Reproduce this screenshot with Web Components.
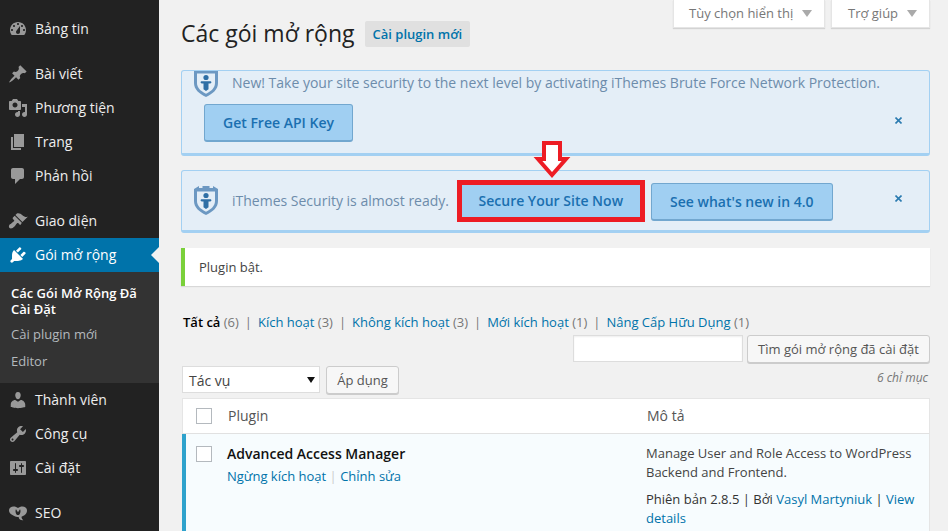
<!DOCTYPE html>
<html lang="vi">
<head>
<meta charset="utf-8">
<title>Các gói mở rộng</title>
<style>
  html, body { margin: 0; height: 531px; overflow: hidden; }
  body {
    font: 13px/1.4em "Open Sans", sans-serif;
    color: #444;
    background: #f1f1f1;
  }
  wp-shell { height: 531px; }
</style>
</head>
<body>
<wp-shell>
  <wp-menu slot="menu">
    <wp-menu-item icon="dashboard">Bảng tin</wp-menu-item>
    <wp-menu-sep></wp-menu-sep>
    <wp-menu-item icon="post">Bài viết</wp-menu-item>
    <wp-menu-item icon="media">Phương tiện</wp-menu-item>
    <wp-menu-item icon="page">Trang</wp-menu-item>
    <wp-menu-item icon="comments">Phản hồi</wp-menu-item>
    <wp-menu-sep></wp-menu-sep>
    <wp-menu-item icon="appearance">Giao diện</wp-menu-item>
    <wp-menu-item icon="plugins" current>Gói mở rộng</wp-menu-item>
    <wp-submenu>
      <a class="on">Các Gói Mở Rộng Đã Cài Đặt</a>
      <a>Cài plugin mới</a>
      <a>Editor</a>
    </wp-submenu>
    <wp-menu-item icon="users">Thành viên</wp-menu-item>
    <wp-menu-item icon="tools">Công cụ</wp-menu-item>
    <wp-menu-item icon="settings">Cài đặt</wp-menu-item>
    <wp-menu-sep></wp-menu-sep>
    <wp-menu-item icon="seo">SEO</wp-menu-item>
  </wp-menu>

  <wp-screen-tabs></wp-screen-tabs>
  <wp-heading></wp-heading>

  <sec-notice style="height:86px">
    <span slot="text">New! Take your site security to the next level by activating iThemes Brute Force Network Protection.</span>
    <sec-button slot="below">Get Free API Key</sec-button>
  </sec-notice>
  <sec-notice inline style="height:63px;margin-top:14px">
    <span slot="text">iThemes Security is almost ready.</span>
    <sec-button slot="actions" marked>Secure Your Site Now</sec-button>
    <sec-button slot="actions" style="--pad:18.500px">See what's new in 4.0</sec-button>
  </sec-notice>

  <wp-updated>Plugin <b>bật</b>.</wp-updated>
  <plugin-filters></plugin-filters>
  <plugin-toolbar></plugin-toolbar>
  <plugin-table></plugin-table>
</wp-shell>

<script>
const ICONS = {
  dashboard: 'M3.76 16h12.48c1.1-1.37 1.76-3.11 1.76-5 0-4.42-3.58-8-8-8s-8 3.58-8 8c0 1.89.66 3.63 1.76 5zM10 4c.55 0 1 .45 1 1s-.45 1-1 1-1-.45-1-1 .45-1 1-1zM6 6c.55 0 1 .45 1 1s-.45 1-1 1-1-.45-1-1 .45-1 1-1zm8 0c.55 0 1 .45 1 1s-.45 1-1 1-1-.45-1-1 .45-1 1-1zm-5.37 5.550L12 7v6c0 1.100-.9 2-2 2s-2-.9-2-2c0-.57.24-1.080.63-1.450zM4 10c.55 0 1 .45 1 1s-.45 1-1 1-1-.45-1-1 .45-1 1-1zm12 0c.55 0 1 .45 1 1s-.45 1-1 1-1-.45-1-1 .45-1 1-1z',
  post: 'M10.44 3.020l1.820-1.820 6.360 6.350-1.830 1.820c-1.050-.68-2.480-.57-3.410.36l-.75.75c-.92.93-1.040 2.350-.35 3.410l-1.830 1.820-2.410-2.410-2.800 2.790c-.42.42-3.380 2.710-3.800 2.290s1.860-3.390 2.280-3.810l2.790-2.790L4.100 9.360l1.830-1.820c1.050.69 2.480.57 3.400-.36l.75-.75c.93-.92 1.050-2.350.36-3.410z',
  media: 'M13 11V4c0-.55-.45-1-1-1h-1.670L9 1H5L3.670 3H2c-.55 0-1 .45-1 1v7c0 .55.45 1 1 1h10c.55 0 1-.45 1-1zM7 4.500c1.380 0 2.500 1.120 2.500 2.500S8.380 9.500 7 9.500 4.500 8.380 4.500 7 5.620 4.500 7 4.500zM14 6h5v10.500c0 1.380-1.120 2.500-2.500 2.500S14 17.880 14 16.500s1.120-2.500 2.500-2.500c.17 0 .34.020.5.050V9h-3V6zm-4 8.050V13h2v3.500c0 1.380-1.120 2.500-2.500 2.500S7 17.880 7 16.500 8.120 14 9.500 14c.17 0 .34.020.5.050z',
  page: 'M6 15V2h10v13H6zm-1 1h8v2H3V5h2v11z',
  comments: 'M5 2h9c1.100 0 2 .9 2 2v7c0 1.100-.9 2-2 2h-2l-5 5v-5H5c-1.100 0-2-.9-2-2V4c0-1.100.9-2 2-2z',
  appearance: 'M14.480 11.060L7.410 3.990l1.500-1.500c.5-.56 2.300-.47 3.510.32 1.210.8 1.430 1.280 2.910 2.100 1.180.64 2.450 1.260 4.450.85zm-.71.71L6.700 4.700 4.930 6.470c-.39.39-.39 1.020 0 1.410l1.060 1.060c.39.39.39 1.030 0 1.420-.6.6-1.430 1.110-2.210 1.690-.35.26-.7.53-1.010.84C1.430 13.230.91 14.100.91 15.460c0 1.100.89 1.990 1.990 1.990 1.360 0 2.230-.52 3.570-1.870.31-.31.58-.66.84-1.010.58-.78 1.090-1.610 1.690-2.210.39-.39 1.030-.39 1.420 0l1.060 1.060c.39.39 1.020.39 1.410 0z',
  plugins: 'M13.110 4.360L9.870 7.600 8 5.730l3.240-3.240c.35-.34 1.050-.2 1.560.32.52.51.66 1.210.31 1.550zm-8 1.770l.91-1.120 9.010 9.010-1.190.84c-.71.71-2.630 1.160-3.820 1.160H6.140L4.900 17.260c-.59.59-1.540.59-2.120 0-.59-.58-.59-1.530 0-2.120l1.240-1.240v-3.880c0-1.130.4-3.190 1.090-3.890zm7.260 3.970l3.240-3.240c.34-.35 1.040-.21 1.550.31.52.51.66 1.210.31 1.550l-3.240 3.250z',
  users: 'M10 9.250c-2.270 0-2.730-3.440-2.730-3.440C7 4.020 7.820 2 9.970 2c2.160 0 2.980 2.020 2.710 3.810 0 0-.41 3.440-2.680 3.440zm0 2.570L12.720 10c2.390 0 4.520 2.330 4.520 4.530v2.490s-3.650 1.130-7.240 1.130c-3.650 0-7.240-1.130-7.240-1.130v-2.490c0-2.250 1.940-4.480 4.470-4.480z',
  tools: 'M16.680 9.770c-1.340 1.340-3.300 1.670-4.950.99l-5.410 6.520c-.99.99-2.590.99-3.580 0s-.99-2.590 0-3.570l6.520-5.420c-.68-1.650-.35-3.610.99-4.950 1.280-1.280 3.120-1.620 4.720-1.060l-2.890 2.890 2.820 2.820 2.860-2.870c.53 1.580.18 3.390-1.080 4.650zM3.810 16.210c.4.39 1.040.39 1.430 0 .4-.4.4-1.040 0-1.430-.39-.4-1.030-.4-1.430 0-.39.39-.39 1.030 0 1.430z',
  settings: 'M18 16V4c0-.55-.45-1-1-1H3c-.55 0-1 .45-1 1v12c0 .55.45 1 1 1h14c.55 0 1-.45 1-1zM8 11h1c.55 0 1 .45 1 1s-.45 1-1 1H8v1.500c0 .28-.22.5-.5.5s-.5-.22-.5-.5V13H6c-.55 0-1-.45-1-1s.45-1 1-1h1V5.500c0-.28.22-.5.5-.5s.5.22.5.5V11zm5-2h-1c-.55 0-1-.45-1-1s.45-1 1-1h1V5.500c0-.28.22-.5.5-.5s.5.22.5.5V7h1c.55 0 1 .45 1 1s-.45 1-1 1h-1v5.500c0 .28-.22.5-.5.5s-.5-.22-.5-.5V9z',
  seo: 'M1 7.500C1 5 3 3.600 5.500 3.600c1.800 0 3.400.6 4.500 1.500 1.100-.9 2.700-1.500 4.500-1.500C17 3.600 19 5 19 7.500c0 3.200-2.700 5.400-5.500 6.200 0 1.500.7 2.700 1.800 3.500-2.400.3-4.300-1-4.700-3.300H9.400C6.200 13.500 1 10.900 1 7.500zM8 6.300C7 7.800 7.600 11 9.300 12h1.400c1.700-1 2.300-4.200 1.300-5.700l-2 3z'
};

class WpShell extends HTMLElement {
  connectedCallback() {
    this.attachShadow({mode: 'open'});
    this.shadowRoot.innerHTML = `
      <style>
        :host { display: grid; grid-template-columns: 159px 1fr; }
        .side { background: #222; height: 531px; overflow: hidden; }
        .main { padding: 0 18px 0 22px; min-width: 0; position: relative; height: 531px; overflow: hidden; }
      </style>
      <div class="side"><slot name="menu"></slot></div>
      <div class="main"><slot></slot></div>
    `;
  }
}

class WpMenu extends HTMLElement {
  connectedCallback() {
    this.attachShadow({mode: 'open'});
    this.shadowRoot.innerHTML = `
      <style>
        :host { display: block; padding-top: 12px; }
      </style>
      <slot></slot>
    `;
  }
}

class WpMenuSep extends HTMLElement {
  connectedCallback() {
    this.attachShadow({mode: 'open'});
    this.shadowRoot.innerHTML = `<style>:host { display: block; height: 11px; }</style>`;
  }
}

class WpMenuItem extends HTMLElement {
  connectedCallback() {
    const path = ICONS[this.getAttribute('icon')];
    this.attachShadow({mode: 'open'});
    this.shadowRoot.innerHTML = `
      <style>
        :host { display: flex; align-items: center; height: 34px; position: relative; color: #eee; font-size: 14px; }
        :host([current]) { background: #0073aa; color: #fff; }
        svg { width: 20px; height: 20px; margin: 0 7px 0 8px; fill: #999; flex: none; }
        :host([current]) svg { fill: #fff; }
        :host([current])::after {
          content: ""; position: absolute; right: 0; top: 50%; margin-top: -8px;
          border: 8px solid transparent; border-right-color: #f1f1f1; border-left-width: 0;
        }
      </style>
      <svg viewBox="0 0 20 20"><path d="${path}"/></svg>
      <span><slot></slot></span>
    `;
  }
}

class WpSubmenu extends HTMLElement {
  connectedCallback() {
    this.attachShadow({mode: 'open'});
    this.shadowRoot.innerHTML = `
      <style>
        :host { display: block; background: #333; height: 111px; padding: 13px 0 0 11px; box-sizing: border-box; font-size: 13px; line-height: 16px; color: #b4b9be; }
        ::slotted(a) { display: block; margin-bottom: 11px; padding-right: 12px; }
        ::slotted(a.on) { color: #fff; font-weight: 600; margin-bottom: 9px; }
      </style>
      <slot></slot>
    `;
  }
}

class WpScreenTabs extends HTMLElement {
  connectedCallback() {
    this.attachShadow({mode: 'open'});
    this.shadowRoot.innerHTML = `
      <style>
        :host { position: absolute; top: 0; right: 18px; display: flex; gap: 6px; }
        div { background: #fff; height: 28px; box-sizing: border-box; display: flex; align-items: center; gap: 9px; color: #777; box-shadow: 0 1px 1px rgba(0,0,0,.12); border: 1px solid #e5e5e5; border-top: 0; font-size: 13px; }
        .a { width: 152px; padding-left: 15px; }
        .b { width: 99px; padding-left: 16px; }
        i { width: 0; height: 0; border: 5px solid transparent; border-top: 7px solid #aaa; border-bottom: 0; }
      </style>
      <div class="a">Tùy chọn hiển thị <i></i></div>
      <div class="b">Trợ giúp <i></i></div>
    `;
  }
}

class WpHeading extends HTMLElement {
  connectedCallback() {
    this.attachShadow({mode: 'open'});
    this.shadowRoot.innerHTML = `
      <style>
        :host { display: flex; align-items: center; gap: 10px; height: 70px; padding: 0 0 4px 0; box-sizing: border-box; }
        h2 { margin: 0; font-size: 23px; font-weight: 400; line-height: 29px; color: #222; }
        a { background: #e0e0e0; color: #0073aa; font-size: 13px; font-weight: 600; height: 26px; line-height: 26px; padding: 0 8px; border-radius: 2px; margin-top: 2px; }
      </style>
      <h2>Các gói mở rộng</h2>
      <a>Cài plugin mới</a>
    `;
  }
}

class SecNotice extends HTMLElement {
  connectedCallback() {
    const inline = this.hasAttribute('inline');
    this.attachShadow({mode: 'open'});
    this.shadowRoot.innerHTML = `
      <style>
        :host { display: block; box-sizing: border-box; background: #e4eef7; border: 1px solid #a3d0f2; border-bottom-width: 3px; border-radius: 3px; position: relative; color: #6d8cab; font-size: 14px; }
        .row { display: flex; align-items: center; height: 100%; }
        .row ::slotted(span) { margin-top: 1px; }
        .clip { overflow: hidden; }
        svg.shield { width: 24px; height: 29px; flex: none; margin: 0 14px 0 12px; }
        .top { height: 30px; display: flex; align-items: flex-start; }
        .top svg.shield { margin-top: -3px; }
        .top ::slotted(span) { margin-top: 3px; }
        .below { padding: 3px 0 0 22px; }
        .actions { display: flex; align-items: flex-start; gap: 6px; margin-left: 8px; }
        .actions ::slotted(:not([marked])) { margin-top: 3px; }
        .x { position: absolute; right: 27px; }
        .x svg { display: block; width: 7px; height: 7px; stroke: #2b7bb0; stroke-width: 1.6; }
      </style>
      ${inline ? `
        <div class="row">
          ${SecNotice.shield}
          <slot name="text"></slot>
          <div class="actions"><slot name="actions"></slot></div>
        </div>
        <div class="x" style="top:24px"><svg viewBox="0 0 7 7"><path d="M.5.5l6 6M6.500.5l-6 6"/></svg></div>
      ` : `
        <div class="top clip">
          ${SecNotice.shield}
          <slot name="text"></slot>
        </div>
        <div class="below"><slot name="below"></slot></div>
        <div class="x" style="top:46px"><svg viewBox="0 0 7 7"><path d="M.5.5l6 6M6.500.5l-6 6"/></svg></div>
      `}
    `;
  }
}
// shield with three merlons along the top edge, person in the middle
SecNotice.shield = `<svg class="shield" viewBox="0 0 24 29">
  <path fill="#6c98c2" d="M0 3l5-3v2h3.500V0h7v2H19V0l5 3v12c0 6.500-5 10.500-12 14C5 25.500 0 21.500 0 15z"/>
  <path fill="#e4eef7" d="M3 5.500h18V15c0 4.800-3.600 8-9 10.800C6.600 23 3 19.800 3 15z"/>
  <circle cx="12" cy="9.500" r="2.600" fill="#2f6fa5"/>
  <path fill="#2f6fa5" d="M7.800 13.200h8.400c.7 0 1.200.5 1.200 1.100s-.5 1.100-1.200 1.100h-1.700v5.800L12 23l-2.500-1.800v-5.800H7.800c-.7 0-1.200-.5-1.200-1.100s.5-1.100 1.200-1.100z"/>
</svg>`;

class SecButton extends HTMLElement {
  connectedCallback() {
    const marked = this.hasAttribute('marked');
    this.attachShadow({mode: 'open'});
    this.shadowRoot.innerHTML = `
      <style>
        :host { display: inline-block; position: relative; }
        .btn { display: block; box-sizing: border-box; height: 38px; line-height: 35px; padding: 0 var(--pad, 18px); background: #a0cff2; border: 1px solid #72a7cf; border-bottom-width: 2px; border-radius: 3px; color: #1a6fb0; font-size: 14px; font-weight: 600; white-space: nowrap; }
        :host([marked]) .btn { border: 0; border-radius: 0; height: 32px; line-height: 32px; padding: 0 16.500px; margin: 0; }
        :host([marked]) { border: 5px solid #ed1c24; }
        svg { position: absolute; left: 71px; top: -44px; width: 38px; height: 38px; overflow: visible; }
      </style>
      <span class="btn"><slot></slot></span>
      ${marked ? `<svg viewBox="0 0 38 38"><path fill="#fff" stroke="#ed1c24" stroke-width="4" d="M11 2h16v16h6L19 34 5 18h6z"/></svg>` : ''}
    `;
  }
}

class WpUpdated extends HTMLElement {
  connectedCallback() {
    this.attachShadow({mode: 'open'});
    this.shadowRoot.innerHTML = `
      <style>
        :host { display: block; box-sizing: border-box; height: 38px; margin-top: 15px; background: #fff; border-left: 4px solid #7ad03a; box-shadow: 0 1px 1px rgba(0,0,0,.1); padding-left: 14px; line-height: 38px; font-size: 13px; color: #444; }
        ::slotted(b) { font-weight: 400; }
      </style>
      <slot></slot>
    `;
  }
}

class PluginFilters extends HTMLElement {
  connectedCallback() {
    this.attachShadow({mode: 'open'});
    this.shadowRoot.innerHTML = `
      <style>
        :host { display: block; margin: 27px 0 0 2px; height: 18px; font-size: 13px; line-height: 18px; color: #777; white-space: nowrap; }
        a { color: #0073aa; }
        b { color: #000; font-weight: 600; }
        s { text-decoration: none; color: #777; margin: 0 2.600px; }
      </style>
      <b>Tất cả</b> (6) <s>|</s> <a>Kích hoạt</a> (3) <s>|</s> <a>Không kích hoạt</a> (3) <s>|</s> <a>Mới kích hoạt</a> (1) <s>|</s> <a>Nâng Cấp Hữu Dụng</a> (1)
    `;
  }
}

class PluginToolbar extends HTMLElement {
  connectedCallback() {
    this.attachShadow({mode: 'open'});
    this.shadowRoot.innerHTML = `
      <style>
        :host { display: block; font-size: 13px; color: #555; }
        .search { display: flex; justify-content: flex-end; gap: 4px; margin-top: 4px; height: 31px; }
        .input { width: 170px; height: 27px; box-sizing: border-box; background: #fff; border: 1px solid #ddd; box-shadow: inset 0 1px 2px rgba(0,0,0,.07); }
        .btn { box-sizing: border-box; height: 28px; line-height: 26px; background: #f7f7f7; border: 1px solid #ccc; border-radius: 3px; box-shadow: 0 1px 0 #ccc; color: #555; }
        .search .btn { width: 183px; text-align: center; }
        .tools { display: grid; grid-template-columns: auto 1fr; align-items: start; height: 32px; }
        .left { display: flex; gap: 6px; }
        .select { width: 138px; height: 27px; box-sizing: border-box; background: #fff; border: 1px solid #ddd; padding: 0 6px; line-height: 28px; font-size: 14px; position: relative; color: #444; margin-left: 1px; }
        .select i { position: absolute; right: 4px; top: 10px; width: 0; height: 0; border: 4px solid transparent; border-top: 6px solid #111; border-bottom: 0; }
        .tools .btn { width: 73px; text-align: center; }
        .count { text-align: right; font-style: italic; font-size: 12px; color: #777; padding: 3px 2px 0 0; }
      </style>
      <div class="search"><div class="input"></div><div class="btn">Tìm gói mở rộng đã cài đặt</div></div>
      <div class="tools">
        <div class="left"><div class="select">Tác vụ<i></i></div><div class="btn">Áp dụng</div></div>
        <div class="count">6 chỉ mục</div>
      </div>
    `;
  }
}

class PluginTable extends HTMLElement {
  connectedCallback() {
    this.attachShadow({mode: 'open'});
    this.shadowRoot.innerHTML = `
      <style>
        :host { display: block; margin-left: 1px; font-size: 13px; }
        .grid { display: grid; }
        .head { background: #fff; height: 36px; box-sizing: border-box; border: 1px solid #e5e5e5; border-bottom-color: #e1e1e1; align-items: center; color: #555; font-size: 14px; grid-template-columns: 464px 1fr; }
        .cell { display: flex; align-items: center; }
        .cb { width: 14px; height: 14px; background: #fff; border: 1px solid #b4b9be; box-sizing: content-box; margin: 0 16px 0 13px; flex: none; }
        .row { background: #f7fcfe; border-left: 4px solid #2ea2cc; border-right: 1px solid #e5e5e5; height: 110px; box-sizing: border-box; padding-top: 10px; grid-template-columns: 460px 1fr; }
        .row .cb { margin: 2px 15px 0 10px; }
        .name { display: flex; }
        .title { font-weight: 600; color: #111; font-size: 14px; line-height: 20px; }
        .acts { color: #0073aa; line-height: 18px; margin-top: 3px; }
        .acts s { text-decoration: none; color: #ccc; }
        .desc { line-height: 19px; color: #444; padding-right: 12px; }
        .desc p { margin: 0 0 8px; }
        .desc div { color: #333; }
        .desc a { color: #0073aa; }
      </style>
      <div class="grid head">
        <div class="cell"><span class="cb"></span><span>Plugin</span></div>
        <div>Mô tả</div>
      </div>
      <div class="grid row">
        <div class="name">
          <span class="cb"></span>
          <div><div class="title">Advanced Access Manager</div>
          <div class="acts"><a>Ngừng kích hoạt</a> <s>|</s> <a>Chỉnh sửa</a></div></div>
        </div>
        <div class="desc">
          <p>Manage User and Role Access to WordPress Backend and Frontend.</p>
          <div>Phiên bản 2.8.5 | Bởi <a>Vasyl Martyniuk</a> | <a>View</a> <a>details</a></div>
        </div>
      </div>
    `;
  }
}

customElements.define('wp-shell', WpShell);
customElements.define('wp-menu', WpMenu);
customElements.define('wp-menu-sep', WpMenuSep);
customElements.define('wp-menu-item', WpMenuItem);
customElements.define('wp-submenu', WpSubmenu);
customElements.define('wp-screen-tabs', WpScreenTabs);
customElements.define('wp-heading', WpHeading);
customElements.define('sec-notice', SecNotice);
customElements.define('sec-button', SecButton);
customElements.define('wp-updated', WpUpdated);
customElements.define('plugin-filters', PluginFilters);
customElements.define('plugin-toolbar', PluginToolbar);
customElements.define('plugin-table', PluginTable);
</script>
</body>
</html>
